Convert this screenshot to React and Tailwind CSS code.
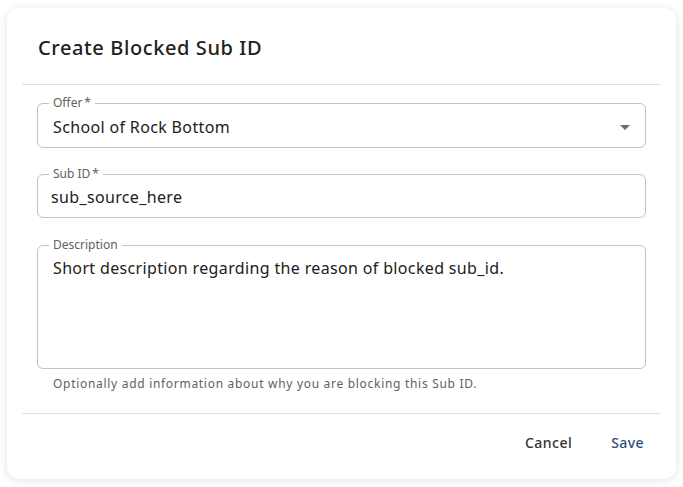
import React from "react"

function OutlinedField({ label, required, className, children }) {
  return (
    <div className={"relative rounded-[6px] border border-[#c4c4c4] " + className}>
      <span className="absolute -top-[9px] left-[11px] bg-white px-[4px] text-[12px] leading-[16px] text-[#616161]">
        {label}
        {required && <span className="ml-[2px]">*</span>}
      </span>
      {children}
    </div>
  )
}

export default function App() {
  return (
    <div className="min-h-screen bg-white p-[7px] pt-[8px] font-['Noto_Sans',sans-serif] text-[#212121]">
      <div className="flex h-[471px] w-[669px] flex-col rounded-[12px] bg-white shadow-[0_1px_8px_rgba(0,0,0,0.12)]">
        <div className="px-[31px] pt-[26px] pb-[22px]">
          <h2 className="text-[20px] font-medium leading-[28px] tracking-[0.6px] text-[#212121]">Create Blocked Sub ID</h2>
        </div>
        <div className="mx-[15px] border-t border-[#e0e0e0]" />

        <div className="flex flex-col px-[30px] pt-[18px]">
          <OutlinedField label="Offer" required className="flex h-[45px] items-center justify-between pl-[15px] pr-[8px] pt-[3px]">
            <span className="text-[16px] tracking-[0.35px] text-[#212121]">School of Rock Bottom</span>
            <svg viewBox="0 0 24 24" className="h-6 w-6 text-[#6b6b6b]" fill="currentColor">
              <path d="M7 10l5 5 5-5z" />
            </svg>
          </OutlinedField>

          <OutlinedField label="Sub ID" required className="mt-[26px] flex h-[44px] items-center pl-[13px] pt-[2px]">
            <span className="text-[16px] tracking-[0.35px] text-[#212121]">sub_source_here</span>
          </OutlinedField>

          <OutlinedField label="Description" className="mt-[27px] h-[124px] pl-[15px] pt-[10px]">
            <p className="text-[16px] leading-[24px] tracking-[0.35px] text-[#212121]">
              Short description regarding the reason of blocked sub_id.
            </p>
          </OutlinedField>

          <p className="mt-[6px] pl-[16px] text-[12px] leading-[18px] tracking-[0.7px] text-[#616161]">
            Optionally add information about why you are blocking this Sub ID.
          </p>
        </div>

        <div className="mx-[15px] mt-[20px] border-t border-[#e0e0e0]" />

        <div className="flex items-center justify-end gap-[19px] px-[22px] pt-[11px]">
          <button className="rounded-[4px] px-[10px] py-[6px] text-[14px] font-medium leading-[24px] tracking-[0.5px] text-[#333333]">
            Cancel
          </button>
          <button className="rounded-[4px] px-[10px] py-[6px] text-[14px] font-medium leading-[24px] tracking-[0.4px] text-[#2f4d7e]">
            Save
          </button>
        </div>
      </div>
    </div>
  )
}
